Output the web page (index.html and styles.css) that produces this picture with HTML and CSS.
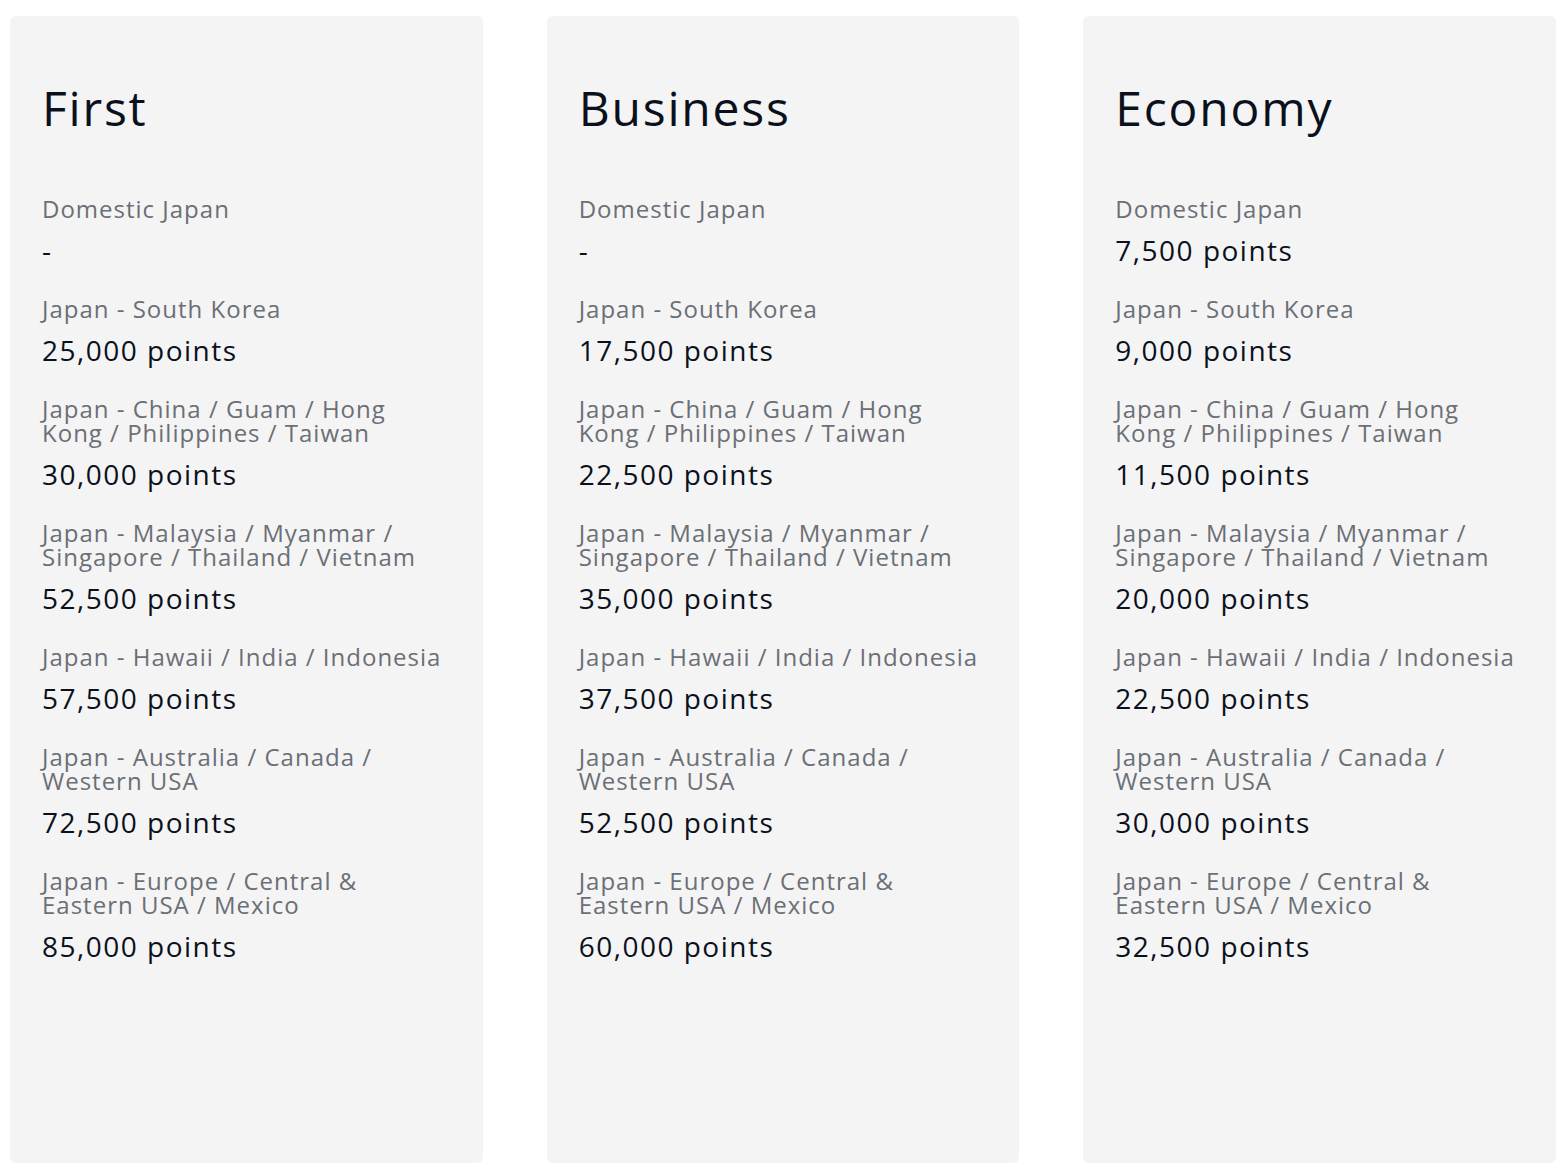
FILE: index.html
```html
<!DOCTYPE html>
<html lang="en">
<head>
<meta charset="utf-8">
<title>Award chart</title>
<link rel="stylesheet" href="styles.css">
</head>
<body>
<main class="page">
  <section class="card">
    <h2 class="title">First</h2>
    <dl class="rows">
      <div class="row"><dt class="label">Domestic Japan</dt><dd class="value">-</dd></div>
      <div class="row"><dt class="label">Japan - South Korea</dt><dd class="value">25,000 points</dd></div>
      <div class="row"><dt class="label">Japan - China / Guam / Hong Kong / Philippines / Taiwan</dt><dd class="value">30,000 points</dd></div>
      <div class="row"><dt class="label">Japan - Malaysia / Myanmar / Singapore / Thailand / Vietnam</dt><dd class="value">52,500 points</dd></div>
      <div class="row"><dt class="label">Japan - Hawaii / India / Indonesia</dt><dd class="value">57,500 points</dd></div>
      <div class="row"><dt class="label">Japan - Australia / Canada / Western USA</dt><dd class="value">72,500 points</dd></div>
      <div class="row"><dt class="label">Japan - Europe / Central &amp; Eastern USA / Mexico</dt><dd class="value">85,000 points</dd></div>
    </dl>
  </section>
  <section class="card">
    <h2 class="title">Business</h2>
    <dl class="rows">
      <div class="row"><dt class="label">Domestic Japan</dt><dd class="value">-</dd></div>
      <div class="row"><dt class="label">Japan - South Korea</dt><dd class="value">17,500 points</dd></div>
      <div class="row"><dt class="label">Japan - China / Guam / Hong Kong / Philippines / Taiwan</dt><dd class="value">22,500 points</dd></div>
      <div class="row"><dt class="label">Japan - Malaysia / Myanmar / Singapore / Thailand / Vietnam</dt><dd class="value">35,000 points</dd></div>
      <div class="row"><dt class="label">Japan - Hawaii / India / Indonesia</dt><dd class="value">37,500 points</dd></div>
      <div class="row"><dt class="label">Japan - Australia / Canada / Western USA</dt><dd class="value">52,500 points</dd></div>
      <div class="row"><dt class="label">Japan - Europe / Central &amp; Eastern USA / Mexico</dt><dd class="value">60,000 points</dd></div>
    </dl>
  </section>
  <section class="card">
    <h2 class="title">Economy</h2>
    <dl class="rows">
      <div class="row"><dt class="label">Domestic Japan</dt><dd class="value">7,500 points</dd></div>
      <div class="row"><dt class="label">Japan - South Korea</dt><dd class="value">9,000 points</dd></div>
      <div class="row"><dt class="label">Japan - China / Guam / Hong Kong / Philippines / Taiwan</dt><dd class="value">11,500 points</dd></div>
      <div class="row"><dt class="label">Japan - Malaysia / Myanmar / Singapore / Thailand / Vietnam</dt><dd class="value">20,000 points</dd></div>
      <div class="row"><dt class="label">Japan - Hawaii / India / Indonesia</dt><dd class="value">22,500 points</dd></div>
      <div class="row"><dt class="label">Japan - Australia / Canada / Western USA</dt><dd class="value">30,000 points</dd></div>
      <div class="row"><dt class="label">Japan - Europe / Central &amp; Eastern USA / Mexico</dt><dd class="value">32,500 points</dd></div>
    </dl>
  </section>
</main>
</body>
</html>
```

FILE: styles.css
```css
html, body {
  margin: 0;
  padding: 0;
  background: #ffffff;
}

body {
  font-family: "Open Sans", "Liberation Sans", sans-serif;
}

.page {
  box-sizing: border-box;
  height: 1176px;
  padding: 16px 10px 13px;
  display: grid;
  grid-template-columns: repeat(3, 1fr);
  column-gap: 64px;
}

.card {
  background: #f4f4f4;
  border-radius: 6px;
  padding: 62px 32px 32px;
}

.title {
  margin: 0 0 59px;
  font-size: 48px;
  line-height: 60px;
  font-weight: 400;
  color: #0b111c;
  letter-spacing: 1.8px;
}

.rows {
  margin: 0;
  display: flex;
  flex-direction: column;
  gap: 29px;
}

.row {
  display: flex;
  flex-direction: column;
}

.label {
  font-size: 24px;
  line-height: 24px;
  color: #6b6f76;
  letter-spacing: 1px;
}

.value {
  margin: 11px 0 0;
  font-size: 28px;
  line-height: 36px;
  color: #0b111c;
  letter-spacing: 1.5px;
}
```
